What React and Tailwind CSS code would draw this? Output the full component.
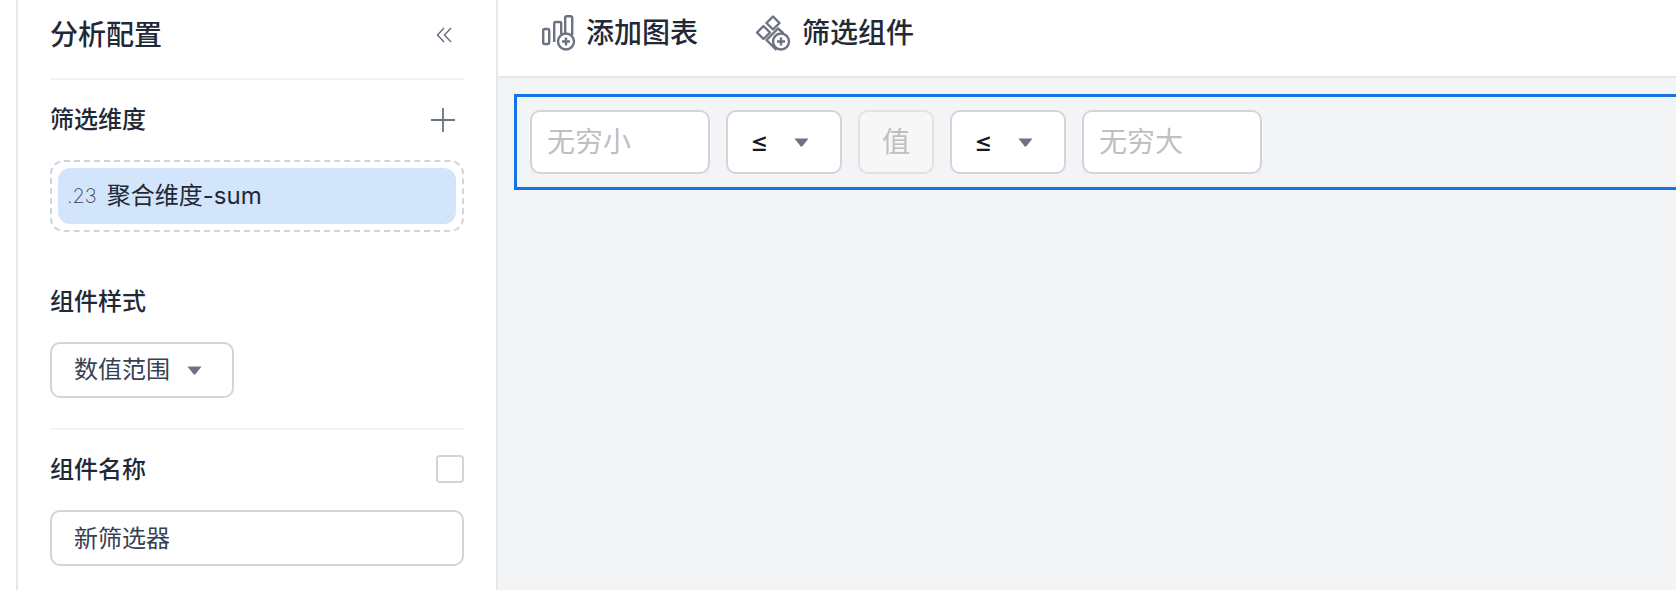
const font = "font-['Inter','Noto_Sans_CJK_SC',sans-serif]";

function Caret() {
  return (
    <svg width="15" height="9" viewBox="0 0 15 9" className="shrink-0">
      <path d="M0.500 0.500h14L8.600 7.900a1.400 1.400 0 0 1-2.200 0z" fill="#6b7280" />
    </svg>
  );
}

function CollapseIcon() {
  return (
    <svg width="16" height="16" viewBox="0 0 16 16" fill="none" stroke="#6b7280" strokeWidth="1.5" className="mr-[12px]">
      <path d="M8 1L1.500 8 8 15M15 1L8.500 8 15 15" />
    </svg>
  );
}

function PlusIcon() {
  return (
    <svg width="24" height="24" viewBox="0 0 24 24" fill="none" stroke="#6b7280" strokeWidth="1.800" className="mr-[9px]">
      <path d="M12 0v24M0 12h24" />
    </svg>
  );
}

function ChartAddIcon() {
  return (
    <svg width="34" height="36" viewBox="0 0 34 36" fill="none" stroke="#6b7280" strokeWidth="2.400" className="shrink-0">
      <rect x="1.200" y="14" width="6" height="15" rx="1.500" />
      <path d="M12.200 27V8.500q0-1.500 1.500-1.500h4q1.500 0 1.500 1.500V19" />
      <path d="M23.200 18V2.700q0-1.500 1.500-1.500h4q1.500 0 1.500 1.500V20" />
      <circle cx="24" cy="26.500" r="8" />
      <path d="M24 22.500v8M20 26.500h8" />
    </svg>
  );
}

function FilterAddIcon() {
  return (
    <svg width="36" height="36" viewBox="0 0 36 36" fill="none" stroke="#6b7280" strokeWidth="2.400" strokeLinejoin="round" className="shrink-0">
      <path d="M18 1.500L24.500 8L18 14.500L11.500 8Z" />
      <path d="M8.500 11L15 17.500L8.500 24L2 17.500Z" />
      <path d="M28.500 18.500L23 13.500L11.500 25L21.500 35" />
      <circle cx="26" cy="26.500" r="8" />
      <path d="M26 22.500v8M22 26.500h8" />
    </svg>
  );
}

function SelectBox({ value }) {
  return (
    <div className="w-[116px] h-[64px] shrink-0 flex items-center justify-between pl-[22px] pr-[31px] bg-white border-2 border-[#d1d5db] rounded-[10px]">
      <span className="text-[28px] text-[#111827]">{value}</span>
      <Caret />
    </div>
  );
}

function RangeInput({ placeholder }) {
  return (
    <div className="w-[180px] h-[64px] shrink-0 flex items-center pl-[15px] bg-white border-2 border-[#d1d5db] rounded-[10px]">
      <span className="text-[28px] text-[#bfbfbf]">{placeholder}</span>
    </div>
  );
}

export default function App() {
  return (
    <div className={`w-[1676px] h-[590px] flex overflow-hidden bg-white ${font}`}>
      {/* 左侧配置 */}
      <aside className="w-[482px] shrink-0 ml-[16px] px-[32px] border-l-2 border-r-2 border-[#e5e7eb] bg-white">
        <div className="h-[80px] flex items-center justify-between pb-[8px] border-b-2 border-[#f3f4f6]">
          <h1 className="text-[28px] font-medium text-[#1f2937]">分析配置</h1>
          <CollapseIcon />
        </div>

        <div className="mt-[24px] h-[32px] flex items-center justify-between">
          <span className="text-[24px] font-medium text-[#1f2937]">筛选维度</span>
          <PlusIcon />
        </div>

        <div className="mt-[24px] h-[72px] flex items-center px-[6px] border-2 border-dashed border-[#d1d5db] rounded-[14px]">
          <div className="w-full h-[56px] flex items-center gap-[10px] pl-[9px] bg-[#d3e5fb] rounded-[12px]">
            <span className="text-[20px] font-extralight text-[#374151]">.23</span>
            <span className="text-[24px] text-[#1f2937]">聚合维度-sum</span>
          </div>
        </div>

        <div className="mt-[54px] text-[24px] font-medium text-[#1f2937] leading-[32px]">组件样式</div>

        <div className="mt-[24px] w-[184px] h-[56px] flex items-center gap-[17px] pl-[22px] border-2 border-[#d1d5db] rounded-[10px]">
          <span className="text-[24px] text-[#374151]">数值范围</span>
          <Caret />
        </div>

        <div className="mt-[30px] h-[2px] bg-[#f3f4f6]" />

        <div className="mt-[24px] flex items-center justify-between">
          <span className="text-[24px] font-medium text-[#1f2937] leading-[32px]">组件名称</span>
          <div className="w-[28px] h-[28px] mb-[2px] border-2 border-[#d1d5db] rounded-[4px]" />
        </div>

        <div className="mt-[24px] h-[56px] flex items-center pl-[22px] pt-[2px] border-2 border-[#d1d5db] rounded-[10px]">
          <span className="text-[24px] text-[#374151]">新筛选器</span>
        </div>
      </aside>

      {/* 右侧内容 */}
      <main className="flex-1 flex flex-col min-w-0 bg-[#f3f4f6]">
        <div className="h-[78px] shrink-0 flex items-center gap-[57px] pl-[44px] pb-[10px] bg-white border-b-2 border-[#e5e7eb]">
          <div className="flex items-center gap-[10px]">
            <ChartAddIcon />
            <span className="text-[28px] font-medium text-[#1f2937]">添加图表</span>
          </div>
          <div className="flex items-center gap-[11px]">
            <FilterAddIcon />
            <span className="text-[28px] font-medium text-[#1f2937]">筛选组件</span>
          </div>
        </div>

        <div className="mt-[16px] ml-[16px] h-[96px] flex items-center gap-[16px] pl-[13px] border-[3px] border-r-0 border-[#1473e6]">
          <RangeInput placeholder="无穷小" />
          <SelectBox value="≤" />
          <div className="w-[76px] h-[64px] shrink-0 flex items-center justify-center bg-[#f7f7f8] border-2 border-[#e0e2e6] rounded-[10px]">
            <span className="text-[28px] text-[#bfbfbf]">值</span>
          </div>
          <SelectBox value="≤" />
          <RangeInput placeholder="无穷大" />
        </div>
      </main>
    </div>
  );
}
